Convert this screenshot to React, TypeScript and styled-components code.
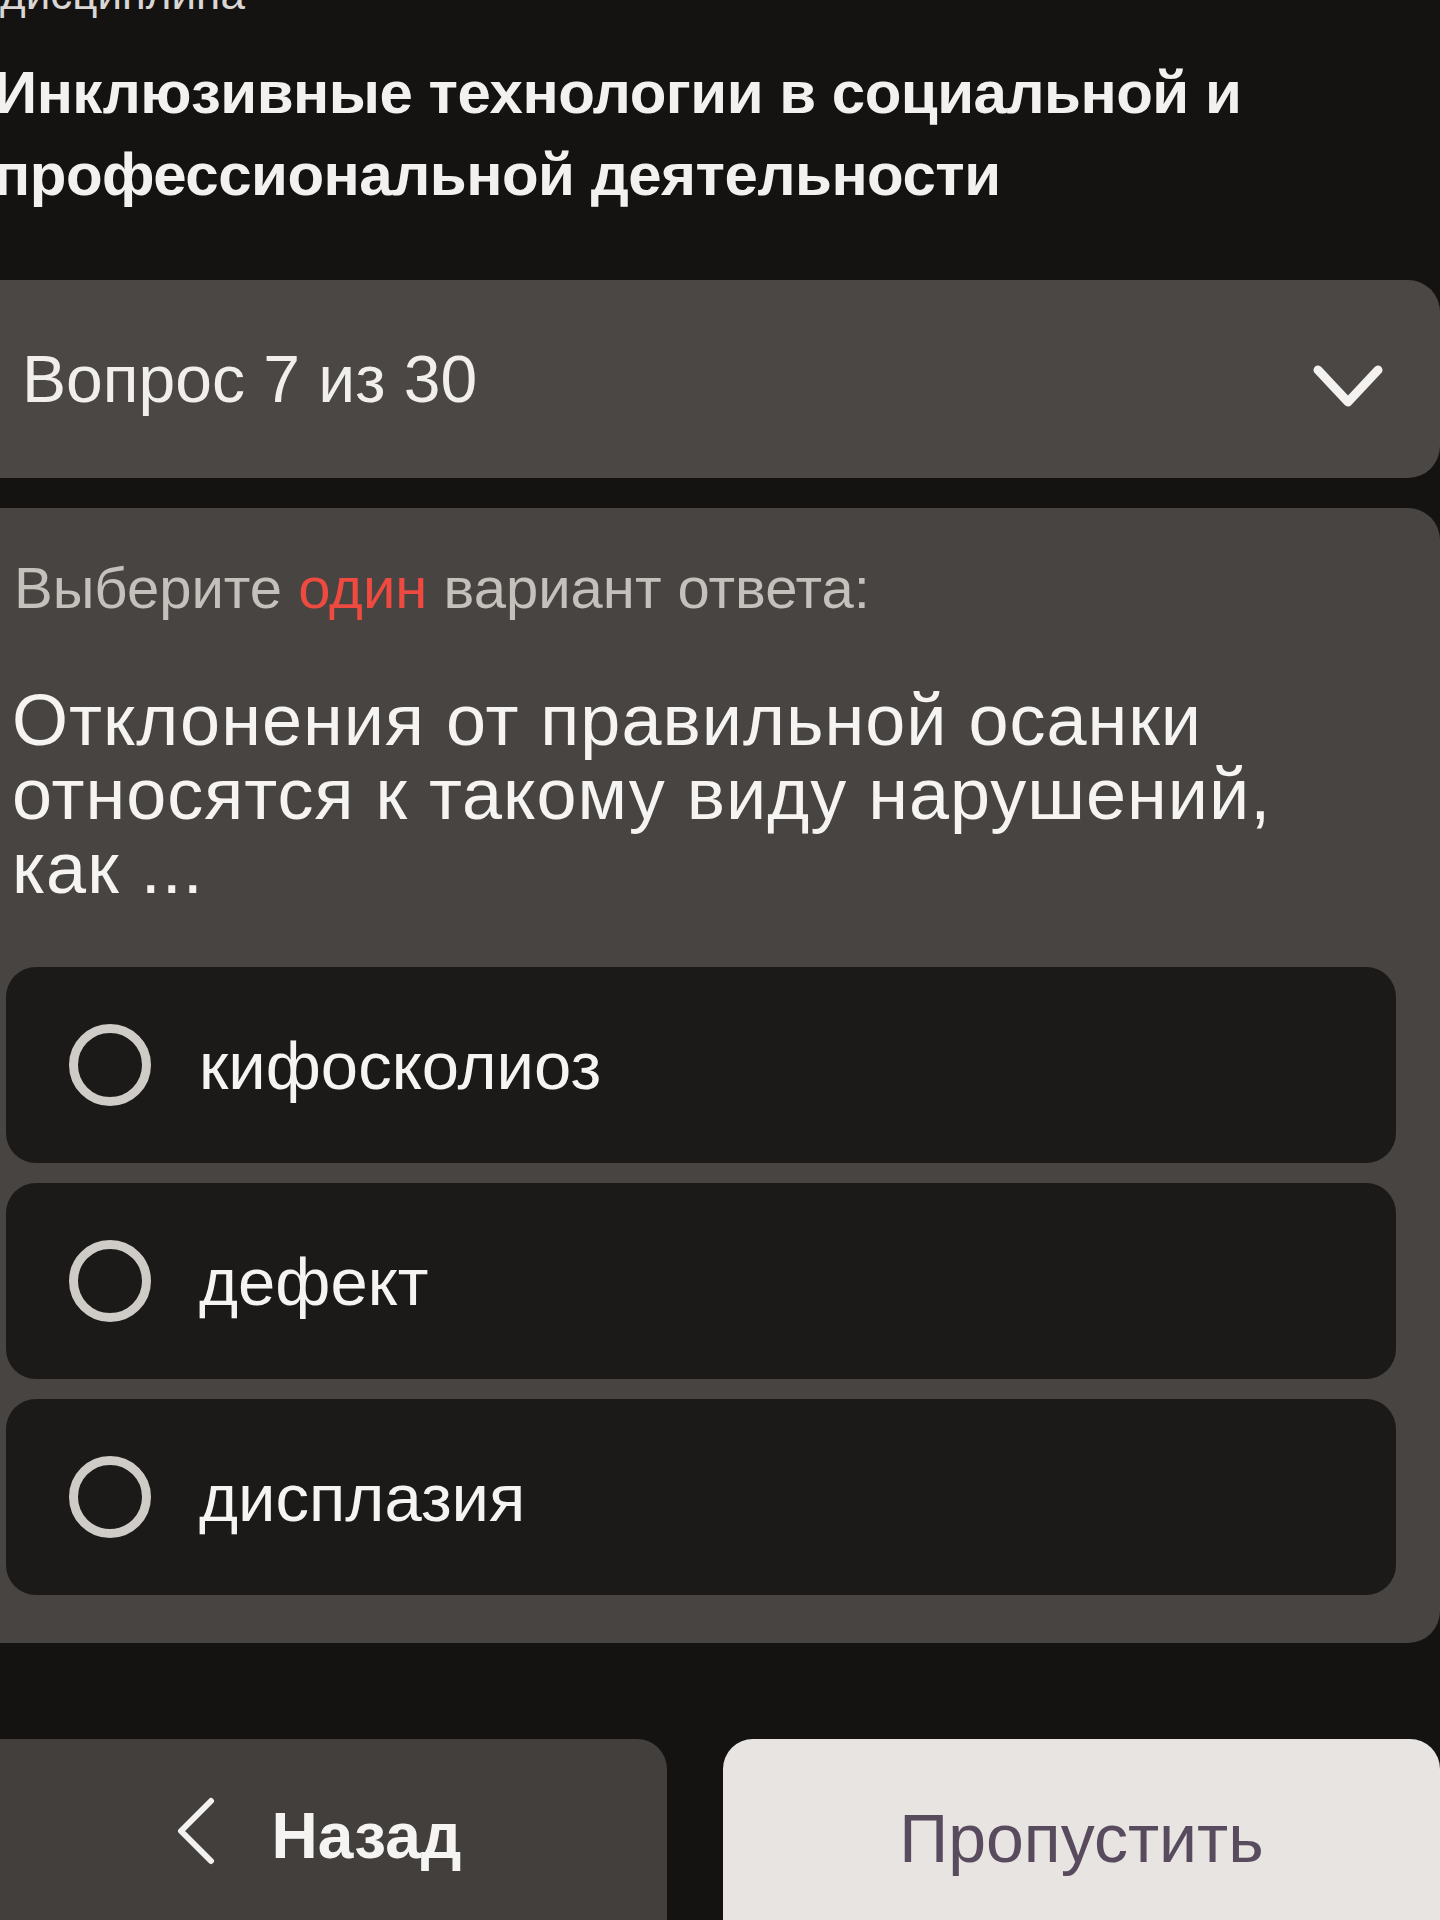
import styled, { createGlobalStyle } from 'styled-components';

const GlobalStyle = createGlobalStyle`
  html, body {
    margin: 0;
    padding: 0;
    background: #141312;
    overflow-x: hidden;
  }
  body {
    font-family: "Liberation Sans", Arial, sans-serif;
    color: #f3f1ef;
  }
`;

const Page = styled.div`
  width: 1470px;
  margin-left: -30px;
  height: 1920px;
  overflow: hidden;
  display: flex;
  flex-direction: column;

  & > * {
    flex-shrink: 0;
  }
`;

const Discipline = styled.div`
  margin-top: -30px;
  padding-left: 30px;
  font-size: 44px;
  line-height: 48px;
  color: #d9d6d3;
`;

const Title = styled.h1`
  margin: 34px 0 0;
  padding-left: 24px;
  font-size: 60px;
  line-height: 82px;
  font-weight: 700;
  letter-spacing: -0.5px;
  color: #f3f1ef;
`;

const Dropdown = styled.div`
  margin-top: 64px;
  width: 1470px;
  height: 198px;
  box-sizing: border-box;
  padding: 0 56px 0 52px;
  background: #4a4744;
  border-radius: 32px;
  display: flex;
  align-items: center;
  justify-content: space-between;

  svg {
    margin-top: 16px;
  }
`;

const DropdownLabel = styled.span`
  font-size: 66px;
  color: #f1efec;
`;

const QuestionCard = styled.section`
  margin-top: 30px;
  width: 1470px;
  box-sizing: border-box;
  padding: 48px 44px 48px 36px;
  background: #474441;
  border-radius: 32px;
  display: flex;
  flex-direction: column;
`;

const Hint = styled.p`
  margin: 0;
  padding-left: 8px;
  font-size: 58px;
  line-height: 64px;
  color: #c4c0bc;
`;

const Accent = styled.span`
  color: #ee4a3f;
`;

const Question = styled.h2`
  margin: 63px 0 0;
  padding-left: 6px;
  font-size: 72px;
  line-height: 74px;
  letter-spacing: 1px;
  font-weight: 400;
  color: #f6f4f2;
`;

const Options = styled.div`
  margin-top: 62px;
  display: flex;
  flex-direction: column;
  gap: 20px;
`;

const Option = styled.label`
  height: 196px;
  box-sizing: border-box;
  padding-left: 63px;
  background: #1c1a19;
  border-radius: 30px;
  display: flex;
  align-items: center;
  gap: 48px;
  cursor: pointer;
`;

const Radio = styled.span`
  width: 82px;
  height: 82px;
  box-sizing: border-box;
  border: 9px solid #cfcbc7;
  border-radius: 50%;
  flex-shrink: 0;
`;

const OptionText = styled.span`
  font-size: 67px;
  color: #f6f4f2;
`;

const Actions = styled.div`
  margin-top: 96px;
  display: grid;
  grid-template-columns: 697px 1fr;
  gap: 56px;
`;

const ActionButton = styled.button<{ $light?: boolean }>`
  height: 220px;
  border: none;
  border-radius: 30px;
  background: ${p => (p.$light ? '#e7e4e1' : '#423f3d')};
  color: ${p => (p.$light ? '#594b5e' : '#f6f4f2')};
  font-family: "Liberation Sans", Arial, sans-serif;
  font-size: ${p => (p.$light ? 68 : 64)}px;
  font-weight: ${p => (p.$light ? 400 : 700)};
  display: flex;
  align-items: flex-start;
  justify-content: center;
  gap: 56px;
  padding-top: 60px;
  cursor: pointer;
`;

const options = ['кифосколиоз', 'дефект', 'дисплазия'];

const App = () => {
  return (
    <>
      <GlobalStyle />
      <Page>
        <Discipline>дисциплина</Discipline>
        <Title>
          Инклюзивные технологии в социальной и
          <br />
          профессиональной деятельности
        </Title>

        <Dropdown>
          <DropdownLabel>Вопрос 7 из 30</DropdownLabel>
          <svg width="72" height="46" viewBox="0 0 72 46">
            <polyline points="6,6 36,38 66,6" fill="none" stroke="#f4f2f0" strokeWidth="9" strokeLinecap="round" strokeLinejoin="round" />
          </svg>
        </Dropdown>

        <QuestionCard>
          <Hint>
            Выберите <Accent>один</Accent> вариант ответа:
          </Hint>
          <Question>
            Отклонения от правильной осанки
            <br />
            относятся к такому виду нарушений,
            <br />
            как ...
          </Question>
          <Options>
            {options.map(o => (
              <Option key={o}>
                <Radio />
                <OptionText>{o}</OptionText>
              </Option>
            ))}
          </Options>
        </QuestionCard>

        <Actions>
          <ActionButton>
            <svg width="40" height="68" viewBox="0 0 40 68" style={{ marginTop: -2 }}>
              <polyline points="35,4 5,34 35,64" fill="none" stroke="#f4f2f0" strokeWidth="6" strokeLinecap="round" strokeLinejoin="round" />
            </svg>
            <span>Назад</span>
          </ActionButton>
          <ActionButton $light>Пропустить</ActionButton>
        </Actions>
      </Page>
    </>
  );
};

export default App;
